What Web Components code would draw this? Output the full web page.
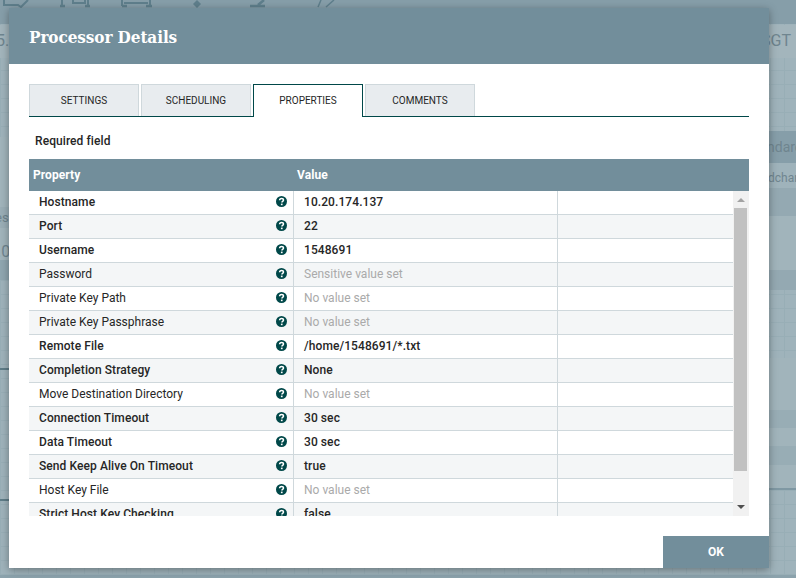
<!DOCTYPE html>
<html>
<head>
<meta charset="utf-8">
<title>Processor Details</title>
<style>
  html, body { margin: 0; height: 100%; overflow: hidden; }
  body { font-family: Roboto, "Liberation Sans", sans-serif; }
</style>
</head>
<body>
<nf-canvas></nf-canvas>
<nf-dialog heading="Processor Details">
  <nf-tabs selected="PROPERTIES" tabs="SETTINGS,SCHEDULING,PROPERTIES,COMMENTS"></nf-tabs>
  <p class="req">Required field</p>
  <nf-props></nf-props>
</nf-dialog>
<script>
// franjas del fondo: [izquierda, arriba, ancho, alto, color]
const BANDS = [
  [0, 25, 9, 33, "#a3b5bc"],
  [0, 137, 9, 70, "#a1b4bb"],
  [0, 207, 9, 21, "#9aaeb6"],
  [0, 228, 9, 32, "#a1b4bb"],
  [0, 260, 9, 20, "#8fa6b0"],
  [0, 368, 9, 2, "#5f7d88"],
  [0, 499, 9, 2, "#5f7d88"],
  [769, 25, 27, 33, "#a3b5bc"],
  [769, 131, 27, 32, "#869ea9"],
  [769, 163, 27, 25, "#9fb3bb"],
  [769, 188, 27, 28, "#94a9b2"],
  [769, 216, 27, 54, "#a1b4bb"],
  [769, 270, 27, 20, "#94a9b2"],
  [769, 358, 27, 52, "#a1b4bb"],
  [769, 410, 27, 18, "#98adb5"],
  [769, 428, 27, 18, "#a1b4bb"],
  [769, 446, 27, 19, "#98adb5"],
  [769, 465, 27, 23, "#a1b4bb"],
  [769, 488, 27, 2, "#7f98a3"],
  [0, 575, 796, 3, "#8ba2ac"],
];

// textos del fondo que asoman por los lados del dialogo
const BITS = [
  ["5.", -4, 32, 16],
  ["SGT", 761, 32, 16],
  ["ndarc", 767, 138, 14],
  ["dchar", 768, 169, 12],
  ["es", -5, 209, 13],
  [".0", -3, 243, 16],
];

class NfCanvas extends HTMLElement {
  constructor() {
    super();
    this.attachShadow({ mode: "open" });
  }

  connectedCallback() {
    this.shadowRoot.innerHTML = `
      <style>
        :host {
          display: block;
          position: absolute;
          inset: 0;
          overflow: hidden;
          background-color: #9fb3bb;
          background-image:
            linear-gradient(#98aeb6 1px, transparent 1px),
            linear-gradient(90deg, #98aeb6 1px, transparent 1px);
          background-size: 14px 14px;
          color: #6f858f;
          font-family: Roboto, "Liberation Sans", sans-serif;
        }
        .toolbar {
          height: 24px;
          background: #869ea9;
        }
        .band, .bit { position: absolute; white-space: nowrap; }
        .bit { line-height: 18px; }
        svg { position: absolute; top: 0; left: 0; }
      </style>
      <div class="toolbar"></div>
      <svg width="400" height="24" fill="none" stroke="#5f7f8c" stroke-width="2">
        <path d="M4 0v5h14l3 2 7-7" />
        <path d="M73 0v3h12V0M62 0v6M88 0v6M122 0v6M150 0v6M124 3h24" />
        <path d="M60 6h5M85 6h5M122 6h5M146 6h6" stroke-width="2.5" />
        <path d="M197 0l4 4-4 4-4-4z" fill="#5f7f8c" stroke="none" />
        <path d="M250 6h15M258 5l6-5" stroke-width="2.5" />
        <path d="M318 7l3-7M326 7l8-7" stroke-width="1.5" />
      </svg>
      ${BANDS.map(
        (b) =>
          `<div class="band" style="left:${b[0]}px;top:${b[1]}px;width:${b[2]}px;height:${b[3]}px;background:${b[4]}"></div>`
      ).join("")}
      ${BITS.map(
        (t) =>
          `<div class="bit" style="left:${t[1]}px;top:${t[2]}px;font-size:${t[3]}px">${t[0]}</div>`
      ).join("")}
    `;
  }
}

// dialogo con cabecera, contenido y boton OK
class NfDialog extends HTMLElement {
  constructor() {
    super();
    this.attachShadow({ mode: "open" });
  }

  connectedCallback() {
    this.shadowRoot.innerHTML = `
      <style>
        :host {
          display: flex;
          flex-direction: column;
          position: absolute;
          left: 9px;
          top: 8px;
          width: 760px;
          height: 560px;
          background: #fff;
          box-shadow: 0 2px 8px rgba(0, 0, 0, 0.35);
        }
        header {
          height: 56px;
          flex: none;
          box-sizing: border-box;
          padding: 17px 20px 0;
          background: #728e9b;
          color: #fff;
          font: bold 17px/24px "DejaVu Serif Condensed", "DejaVu Serif", serif;
          font-stretch: condensed;
          letter-spacing: -0.1px;
        }
        .body {
          flex: 1;
          padding: 20px 20px 0;
          min-height: 0;
        }
        .footer {
          flex: none;
          height: 32px;
          display: flex;
          justify-content: flex-end;
        }
        .ok {
          width: 106px;
          background: #728e9b;
          color: #fff;
          font: 700 12px/33px Roboto, sans-serif;
          text-align: center;
        }
        ::slotted(.req) {
          margin: 17px 0 11px 6px;
          font: 500 12px/14px Roboto, sans-serif;
          letter-spacing: 0.08px;
          color: #262626;
        }
      </style>
      <header>${this.getAttribute("heading")}</header>
      <div class="body"><slot></slot></div>
      <div class="footer"><div class="ok">OK</div></div>
    `;
  }
}

class NfTabs extends HTMLElement {
  constructor() {
    super();
    this.attachShadow({ mode: "open" });
  }

  connectedCallback() {
    const sel = this.getAttribute("selected");
    const tabs = this.getAttribute("tabs").split(",");
    this.shadowRoot.innerHTML = `
      <style>
        :host {
          display: flex;
          gap: 2px;
          height: 33px;
          box-shadow: inset 0 -1px 0 #004849;
        }
        .tab {
          box-sizing: border-box;
          width: 110px;
          height: 32px;
          background: #e8ecef;
          border: 1px solid #cfd8dc;
          border-bottom: none;
          color: #262626;
          font: 400 10px/32px Roboto, sans-serif;
          text-align: center;
        }
        .tab.on {
          height: 33px;
          background: #fff;
          border: 1px solid #004849;
          border-bottom: none;
        }
      </style>
      ${tabs
        .map((t) => `<div class="tab ${t === sel ? "on" : ""}">${t}</div>`)
        .join("")}
    `;
  }
}

// tabla de propiedades, se recorta abajo como en el original
const PROPS = [
  ["Hostname", "10.20.174.137", 1],
  ["Port", "22", 1],
  ["Username", "1548691", 1],
  ["Password", "Sensitive value set", 0],
  ["Private Key Path", "No value set", 0],
  ["Private Key Passphrase", "No value set", 0],
  ["Remote File", "/home/1548691/*.txt", 1],
  ["Completion Strategy", "None", 1],
  ["Move Destination Directory", "No value set", 0],
  ["Connection Timeout", "30 sec", 1],
  ["Data Timeout", "30 sec", 1],
  ["Send Keep Alive On Timeout", "true", 1],
  ["Host Key File", "No value set", 0],
  ["Strict Host Key Checking", "false", 1],
];

class NfProps extends HTMLElement {
  constructor() {
    super();
    this.attachShadow({ mode: "open" });
  }

  connectedCallback() {
    const icon = `<svg width="11" height="11" viewBox="0 0 11 11"><circle cx="5.5" cy="5.5" r="5.5" fill="#004849"/><path d="M3.6 4.3c0-1.2.9-1.9 2-1.9s1.9.7 1.9 1.7c0 1.4-1.6 1.3-1.6 2.5" fill="none" stroke="#fff" stroke-width="1.5"/><rect x="4.9" y="7.6" width="1.7" height="1.6" fill="#fff"/></svg>`;
    this.shadowRoot.innerHTML = `
      <style>
        :host {
          display: block;
          width: 720px;
          font: 12px Roboto, sans-serif;
        }
        .head {
          display: flex;
          height: 32px;
          background: #728e9b;
          color: #fff;
          font-weight: 700;
          line-height: 32px;
          letter-spacing: 0.08px;
        }
        .head span:first-child { width: 264px; padding-left: 4px; }
        .wrap {
          display: flex;
          height: 325px;
          overflow: hidden;
        }
        .rows { width: 704px; flex: none; }
        .row {
          display: flex;
          height: 24px;
          box-sizing: border-box;
          border-bottom: 1px solid #cfd8dc;
          line-height: 22px;
          color: #262626;
          background: #fff;
        }
        .row:nth-child(even) { background: #f4f6f7; }
        .row.req { font-weight: 500; letter-spacing: 0.08px; }
        .name {
          width: 265px;
          box-sizing: border-box;
          padding: 0 6px 0 10px;
          display: flex;
          justify-content: space-between;
          align-items: flex-start;
          border-right: 1px solid #cfd8dc;
        }
        .name svg { margin-top: 5px; }
        .val {
          width: 264px;
          box-sizing: border-box;
          padding-left: 10px;
          border-right: 1px solid #cfd8dc;
        }
        .val.empty { color: #aaa; }
        .bar {
          width: 16px;
          background: #f1f1f1;
          position: relative;
        }
        .thumb {
          position: absolute;
          left: 1px;
          top: 17px;
          width: 13px;
          height: 263px;
          background: #c1c1c1;
        }
        .up, .down {
          position: absolute;
          left: 4px;
          width: 0;
          height: 0;
          border-left: 4px solid transparent;
          border-right: 4px solid transparent;
        }
        .up { top: 7px; border-bottom: 4px solid #a3a3a3; }
        .down { top: 314px; border-top: 4px solid #505050; }
      </style>
      <div class="head"><span>Property</span><span>Value</span></div>
      <div class="wrap">
        <div class="rows">
          ${PROPS.map(
            (p) => `
            <div class="row ${p[2] ? "req" : ""}">
              <div class="name"><span>${p[0]}</span>${icon}</div>
              <div class="val ${p[2] ? "" : "empty"}">${p[1]}</div>
            </div>`
          ).join("")}
        </div>
        <div class="bar"><div class="up"></div><div class="thumb"></div><div class="down"></div></div>
      </div>
    `;
  }
}

customElements.define("nf-canvas", NfCanvas);
customElements.define("nf-dialog", NfDialog);
customElements.define("nf-tabs", NfTabs);
customElements.define("nf-props", NfProps);
</script>
</body>
</html>
